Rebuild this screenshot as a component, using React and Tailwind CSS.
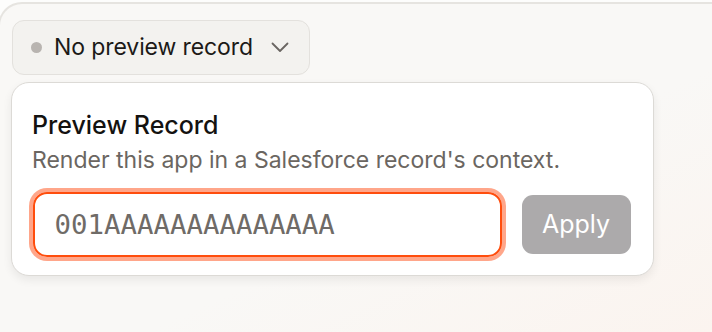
import React, { useState } from "react";

const sans = { fontFamily: "Inter, 'Noto Sans', sans-serif" };

const App = () => {
  const [recordId, setRecordId] = useState("");

  return (
    <div className="w-[712px] h-[332px] bg-[#fdfdfc] pt-[2px] overflow-hidden" style={sans}>
      <div className="-ml-[2px] h-full border-t-2 border-l-2 border-[#e6e4e0] rounded-tl-[24px] bg-[linear-gradient(155deg,#f9f8f6_60%,#fbf4ef_100%)] pl-[11px] pt-[16px] flex flex-col items-start">
        <button className="ml-[1px] flex items-center h-[55px] w-[298px] rounded-[12px] border border-[#e3e1dd] bg-[#f3f2ef] pl-[18px] text-[#1c1a18]">
          <span className="shrink-0 w-[11px] h-[11px] rounded-full bg-[#b8b4b0]" />
          <span className="ml-[12px] text-[23px] tracking-[-0.1px]">No preview record</span>
          <svg className="ml-[18px] shrink-0" width="18" height="11" viewBox="0 0 18 11" fill="none" stroke="#6a6662" strokeWidth="1.8" strokeLinecap="round" strokeLinejoin="round">
            <path d="M1.5 1.5l7.5 7.5 7.5-7.5" />
          </svg>
        </button>

        <div className="mt-[7px] w-[643px] rounded-[18px] border-[1.5px] border-[#dcdad6] bg-white shadow-[0_4px_10px_rgba(0,0,0,0.07)] pl-[20px] pr-[22px] pt-[26px] pb-[18px]">
          <h2 className="text-[25px] leading-[32px] font-medium text-[#141210]">Preview Record</h2>
          <p className="mt-[4px] text-[23px] leading-[30px] text-[#6b6661]">
            Render this app in a Salesforce record's context.
          </p>
          <div className="mt-[17px] flex items-center gap-[20px]">
            <input
              value={recordId}
              onChange={(e) => setRecordId(e.target.value)}
              placeholder="001AAAAAAAAAAAAAA"
              className="ml-[0.5px] w-[469px] h-[65px] rounded-[14px] border-2 border-[#ff4d0d] ring-[4px] ring-[#ffa68a] outline-none px-[20px] text-[27.4px] text-[#1c1a18] placeholder:text-[#6f6b67]"
              style={{ fontFamily: "'DejaVu Sans Mono', monospace" }}
            />
            <button className="w-[109px] h-[59px] rounded-[11px] bg-[#acaaab] text-white text-[25px]">
              Apply
            </button>
          </div>
        </div>
      </div>
    </div>
  );
};

export default App;
